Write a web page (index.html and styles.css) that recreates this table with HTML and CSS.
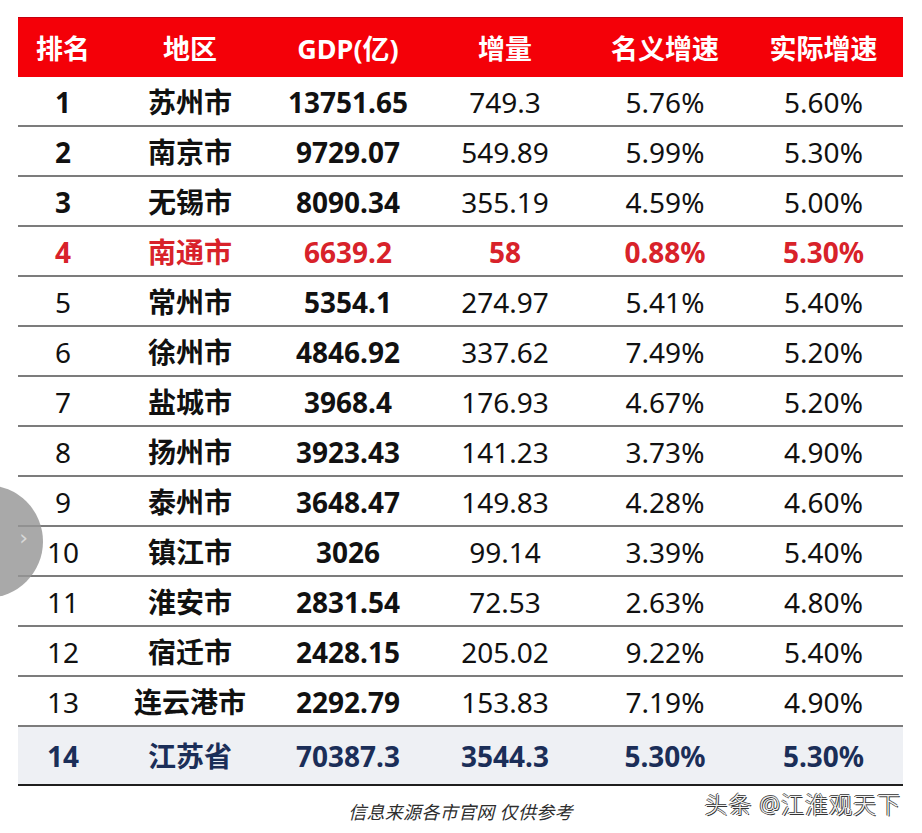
FILE: index.html
```html
<!DOCTYPE html>
<html lang="zh">
<head>
<meta charset="utf-8">
<link rel="stylesheet" href="styles.css">
</head>
<body>
<div class="page">
  <div class="table">
    <div class="row head">
      <div>排名</div><div>地区</div><div>GDP(亿)</div><div>增量</div><div>名义增速</div><div>实际增速</div>
    </div>
    <div class="row"><div class="b">1</div><div class="b">苏州市</div><div class="b">13751.65</div><div>749.3</div><div>5.76%</div><div>5.60%</div></div>
    <div class="row"><div class="b">2</div><div class="b">南京市</div><div class="b">9729.07</div><div>549.89</div><div>5.99%</div><div>5.30%</div></div>
    <div class="row"><div class="b">3</div><div class="b">无锡市</div><div class="b">8090.34</div><div>355.19</div><div>4.59%</div><div>5.00%</div></div>
    <div class="row hl"><div class="b">4</div><div class="b">南通市</div><div class="b">6639.2</div><div class="b">58</div><div class="b">0.88%</div><div class="b">5.30%</div></div>
    <div class="row"><div>5</div><div class="b">常州市</div><div class="b">5354.1</div><div>274.97</div><div>5.41%</div><div>5.40%</div></div>
    <div class="row"><div>6</div><div class="b">徐州市</div><div class="b">4846.92</div><div>337.62</div><div>7.49%</div><div>5.20%</div></div>
    <div class="row"><div>7</div><div class="b">盐城市</div><div class="b">3968.4</div><div>176.93</div><div>4.67%</div><div>5.20%</div></div>
    <div class="row"><div>8</div><div class="b">扬州市</div><div class="b">3923.43</div><div>141.23</div><div>3.73%</div><div>4.90%</div></div>
    <div class="row"><div>9</div><div class="b">泰州市</div><div class="b">3648.47</div><div>149.83</div><div>4.28%</div><div>4.60%</div></div>
    <div class="row"><div>10</div><div class="b">镇江市</div><div class="b">3026</div><div>99.14</div><div>3.39%</div><div>5.40%</div></div>
    <div class="row"><div>11</div><div class="b">淮安市</div><div class="b">2831.54</div><div>72.53</div><div>2.63%</div><div>4.80%</div></div>
    <div class="row"><div>12</div><div class="b">宿迁市</div><div class="b">2428.15</div><div>205.02</div><div>9.22%</div><div>5.40%</div></div>
    <div class="row"><div>13</div><div class="b">连云港市</div><div class="b">2292.79</div><div>153.83</div><div>7.19%</div><div>4.90%</div></div>
    <div class="row total"><div>14</div><div>江苏省</div><div>70387.3</div><div>3544.3</div><div>5.30%</div><div>5.30%</div></div>
  </div>
  <div class="footer">
    <span class="source">信息来源各市官网 仅供参考</span>
    <span class="mark">头条 @江淮观天下</span>
  </div>
</div>
<div class="pager"><span class="chev">&#8250;</span></div>
</body>
</html>
```
FILE: styles.css
```css
html, body {
  margin: 0;
  padding: 0;
  background: #ffffff;
}
body {
  font-family: "Noto Sans", "Noto Sans CJK SC", sans-serif;
  color: #111111;
  overflow: hidden;
}
.page {
  padding: 17px 0 0 18px;
  width: 885px;
}
.table {
  display: flex;
  flex-direction: column;
}
.row {
  display: grid;
  grid-template-columns: 90px 164px 152px 162px 158px 159px;
  height: 50px;
  box-sizing: border-box;
  border-bottom: 2px solid #7c7c7c;
  align-items: center;
  font-size: 28px;
  line-height: 1;
}
.row > div {
  text-align: center;
  padding-top: 1px;
}
.row .b {
  font-weight: 700;
}
.row.head {
  height: 60px;
  background: #f40008;
  border-bottom: none;
  border-top: 1px solid #c40010;
  color: #ffffff;
  font-size: 27px;
  font-weight: 700;
}
.row.hl {
  color: #d8222a;
}
.row.total {
  height: 59px;
  background: #eef0f4;
  color: #1b2e58;
  font-weight: 700;
  border-bottom: 2px solid #1e1e1e;
}
.footer {
  position: relative;
  height: 45px;
  display: flex;
  justify-content: center;
  align-items: flex-start;
}
.source {
  margin-top: 12px;
  font-size: 18px;
  font-style: italic;
  color: #2e2e2e;
  letter-spacing: 0.3px;
}
.mark {
  position: absolute;
  right: 2px;
  top: 0;
  font-size: 23px;
  font-weight: 300;
  color: #f2f2f2;
  letter-spacing: 1px;
  text-shadow: 1px 1px 0 #333, -1px 0 0 #444, 0 -1px 0 #555;
}
.pager {
  position: absolute;
  left: -70px;
  top: 485px;
  width: 113px;
  height: 113px;
  border-radius: 50%;
  background: rgba(150, 150, 150, 0.82);
  display: flex;
  align-items: center;
  justify-content: flex-end;
}
.chev {
  margin-right: 15px;
  margin-top: -8px;
  font-family: "DejaVu Sans", sans-serif;
  font-size: 22px;
  color: #d8d8d8;
}
```
